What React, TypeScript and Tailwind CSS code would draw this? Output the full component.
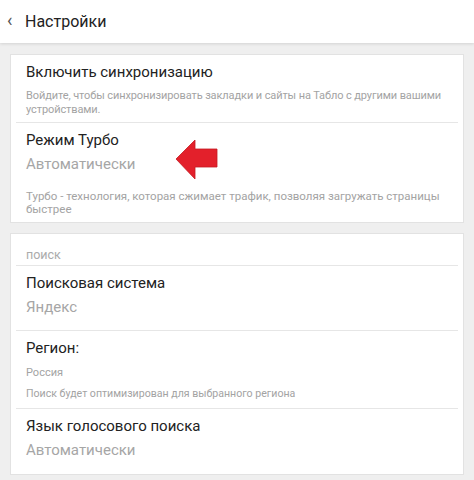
import React from "react";

const font = { fontFamily: "Roboto, 'Noto Sans', sans-serif" };

function Divider() {
  return <div className="mx-[5px] h-px bg-[#e6e6e6]" />;
}

export default function App() {
  return (
    <div className="w-[474px] h-[480px] bg-[#efefef] overflow-hidden" style={font}>
      <div className="h-[43px] bg-white flex items-center shadow-[0_1px_3px_rgba(0,0,0,0.12)] relative z-10">
        <span className="ml-[7px] w-[12px] text-[18px] leading-none text-[#555] -mt-[3px]">‹</span>
        <span className="ml-[6px] text-[16px] text-[#222]">Настройки</span>
      </div>
      <div className="mt-[11px] mx-[10px] w-[454px] bg-white border border-[#e2e2e2] relative">
        <div className="pl-[15px] pr-[4px] pt-[7px] pb-[5px]">
          <div className="text-[15px] leading-[20px] text-[#222]">Включить синхронизацию</div>
          <div className="mt-[7px] text-[11px] leading-[14px] text-[#a3a3a3] tracking-[-0.1px]">
            Войдите, чтобы синхронизировать закладки и сайты на Табло с другими вашими устройствами.
          </div>
        </div>
        <Divider />
        <div className="px-[15px] pt-[7px] pb-[6px]">
          <div className="text-[15px] leading-[20px] text-[#222]">Режим Турбо</div>
          <div className="mt-[4px] text-[15px] leading-[20px] text-[#a6a6a6]">Автоматически</div>
          <div className="mt-[16px] text-[11.5px] leading-[13px] text-[#a3a3a3]">
            Турбо - технология, которая сжимает трафик, позволяя загружать страницы быстрее
          </div>
        </div>
        <svg className="absolute left-[155px] top-[85px]" width="52" height="40" viewBox="0 0 52 40">
          <polygon points="10,19 29,0 29,9 51,9 51,27 29,27 29,39" fill="#e3202b" stroke="#c41a22" strokeWidth="0.8" />
        </svg>
      </div>
      <div className="mt-[10px] mx-[10px] w-[454px] bg-white border border-[#e2e2e2]">
        <div className="px-[15px] pt-[14px] pb-[3px] text-[12.5px] leading-[14px] text-[#ababab]">поиск</div>
        <Divider />
        <div className="px-[15px] pt-[7px] pb-[13px]">
          <div className="text-[15px] leading-[20px] text-[#222]">Поисковая система</div>
          <div className="mt-[4px] text-[15px] leading-[20px] text-[#a6a6a6]">Яндекс</div>
        </div>
        <Divider />
        <div className="px-[15px] pt-[7px] pb-[7px]">
          <div className="text-[15px] leading-[20px] text-[#222]">Регион:</div>
          <div className="mt-[8px] text-[11px] leading-[14px] text-[#a3a3a3]">Россия</div>
          <div className="mt-[7px] text-[10.6px] leading-[14px] text-[#a3a3a3]">Поиск будет оптимизирован для выбранного региона</div>
        </div>
        <Divider />
        <div className="px-[15px] pt-[7px] pb-[14px]">
          <div className="text-[15px] leading-[20px] text-[#222]">Язык голосового поиска</div>
          <div className="mt-[4px] text-[15px] leading-[20px] text-[#a6a6a6]">Автоматически</div>
        </div>
      </div>
    </div>
  );
}
